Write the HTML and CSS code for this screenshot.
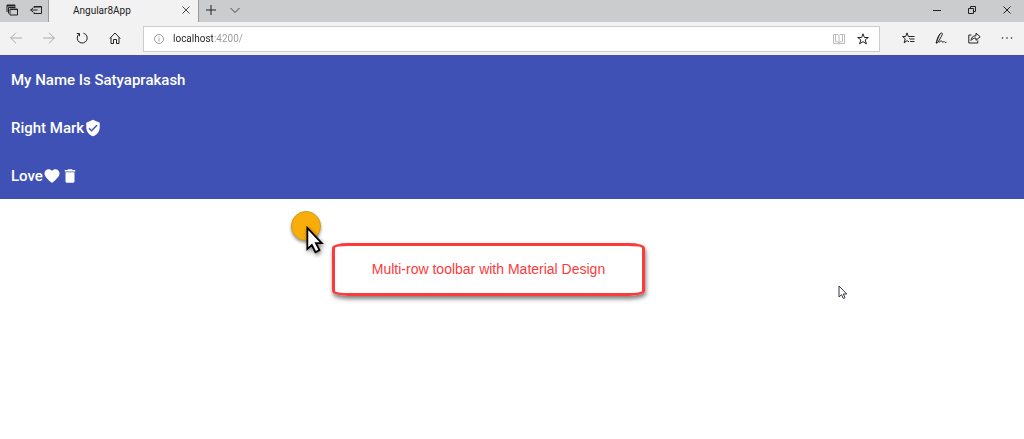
FILE: index.html
```html
<!DOCTYPE html>
<html lang="en">
	<head>
		<meta charset="utf-8">
		<title>Angular8App</title>
		<link rel="stylesheet" href="styles.css">
	</head>
	<body>
		<!-- tab strip -->
		<div class="tabs">
			<button class="tab-btn" aria-label="Tabs you've set aside">
				<svg width="12" height="12" viewBox="0 0 12 12"><path d="M1 8V1h8v1.500M1 2h8M2.500 9.500V3.500h7M4 5h7.500v6H4z"/><path d="M4 5.500h7.500M1 1.500h8"/></svg>
			</button>
			<button class="tab-btn" aria-label="Set these tabs aside">
				<svg width="12" height="12" viewBox="0 0 12 12"><path d="M4 4V2.500h7.500v7H4V8M4 3h7.500M.5 6h7M3 4L.7 6L3 8"/></svg>
			</button>
			<div class="tab">
				<span class="tab-title">Angular8App</span>
				<button class="tab-close" aria-label="Close tab">
					<svg class="thin" width="8" height="8" viewBox="0 0 8 8"><path d="M.5.5l7 7M7.500.5l-7 7"/></svg>
				</button>
			</div>
			<button class="tab-btn" aria-label="New tab">
				<svg width="10" height="10" viewBox="0 0 10 10"><path d="M5 0v10M0 5h10"/></svg>
			</button>
			<button class="tab-btn" aria-label="Show tab previews">
				<svg class="thin" width="10" height="10" viewBox="0 0 10 10"><path d="M.5 3L5 7.500L9.500 3"/></svg>
			</button>
			<div class="window">
				<button aria-label="Minimize"><svg width="8" height="8" viewBox="0 0 8 8"><path d="M0 4.500h8"/></svg></button>
				<button aria-label="Restore"><svg width="8" height="8" viewBox="0 0 8 8"><path d="M.5 2.500h5v5h-5zM2.500 2V.5h5v5H6"/></svg></button>
				<button aria-label="Close"><svg width="8" height="8" viewBox="0 0 8 8"><path d="M.5.5l7 7M7.500.5l-7 7"/></svg></button>
			</div>
		</div>

		<!-- address bar -->
		<div class="nav">
			<button class="off" aria-label="Back"><svg class="thin" width="12" height="12" viewBox="0 0 12 12"><path d="M.7 6H12M6 .7L.7 6L6 11.300"/></svg></button>
			<button class="off" aria-label="Forward"><svg class="thin" width="12" height="12" viewBox="0 0 12 12"><path d="M0 6h11.300M6 .7L11.300 6L6 11.300"/></svg></button>
			<button aria-label="Refresh"><svg width="12" height="12" viewBox="0 0 12 12"><path d="M7.500 1.200A5 5 0 1 1 3 2.200M.8 1.500h2.700v2.700"/></svg></button>
			<button aria-label="Home"><svg width="12" height="12" viewBox="0 0 12 12"><path d="M.7 6.500L6 1l5.300 5.500M2 5.500v6h2.500V7.500h3v4H10v-6"/></svg></button>
			<div class="address">
				<svg class="info" width="10" height="10" viewBox="0 0 10 10"><circle cx="5" cy="5" r="4.500"/><path d="M5 4.300v3.200M5 2.500v1"/></svg>
				<input class="url" type="text" aria-label="Address" value="localhost:4200/">
				<button class="off book" aria-label="Reading view"><svg width="12" height="12" viewBox="0 0 12 12"><path d="M.5 1.500H5l1 1l1-1h4.500v9H7l-1 .8l-1-.8H.5zM6 2.500v8M2.500 1.500v7.200h2L6 10l1.500-1.300h2V1.500"/></svg></button>
				<button aria-label="Add to favorites"><svg width="12" height="12" viewBox="0 0 12 12"><path d="M6 .8l1.400 3.700h3.900L8.200 6.900l1.200 4L6 8.600l-3.400 2.300l1.200-4L.7 4.500h3.900z"/></svg></button>
			</div>
			<button aria-label="Favorites"><svg width="13" height="12" viewBox="0 0 13 12"><path d="M7 4.500h5.500M8 7h4.500M8 9.500h4.500M7 4.500h-.6L5 .9L3.700 4.500H.6L3.200 6.800L2.200 10.800L5.200 8.600l1.800 1.300M7 7l.8-.6"/></svg></button>
			<button aria-label="Add notes"><svg width="12" height="12" viewBox="0 0 12 12"><path d="M1 11L4.200 3.500C5 1.500 6 .5 6.900 1s.4 1.700-.4 3.200L3 10.300L1.500 11.300C1.500 8 3 4 5.500 1.500M4 10.500c1.800-1.800 2.700-2 3-1.300s.3 1.500 1.200.8s1.300-.3 1.700.2s.8.500 1.600 0"/></svg></button>
			<button aria-label="Share"><svg width="13" height="12" viewBox="0 0 13 12"><path d="M3.500 3H.8v8h9V8.500M3 8.500C3.300 5.300 5 3.700 8 3.700V1.200l4.200 3.600L8 8.300V6C5.700 6 4.300 6.800 3 8.500z"/></svg></button>
			<button aria-label="Settings and more"><svg class="dots" width="12" height="12" viewBox="0 0 12 12"><circle cx="1.500" cy="6" r=".8"/><circle cx="6" cy="6" r=".8"/><circle cx="10.500" cy="6" r=".8"/></svg></button>
		</div>

		<!-- multi-row toolbar -->
		<header class="toolbar">
			<div class="toolbar-row">My Name Is Satyaprakash</div>
			<div class="toolbar-row">
				<span>Right Mark</span>
				<svg class="mat-icon" viewBox="0 0 24 24"><path d="M12 1L3 5v6c0 5.550 3.840 10.740 9 12 5.160-1.260 9-6.450 9-12V5l-9-4zm-2 16l-4-4 1.410-1.410L10 14.170l6.590-6.590L18 9l-8 8z"/></svg>
			</div>
			<div class="toolbar-row">
				<span>Love</span>
				<svg class="mat-icon" viewBox="0 0 24 24"><path d="M12 21.350l-1.450-1.320C5.400 15.360 2 12.280 2 8.500 2 5.420 4.420 3 7.500 3c1.740 0 3.410.81 4.500 2.090C13.090 3.810 14.760 3 16.500 3 19.580 3 22 5.420 22 8.500c0 3.780-3.400 6.860-8.550 11.540L12 21.350z"/></svg>
				<svg class="mat-icon" viewBox="0 0 24 24"><path d="M6 19c0 1.100.9 2 2 2h8c1.100 0 2-.9 2-2V7H6v12zM19 4h-3.500l-1-1h-5l-1 1H5v2h14V4z"/></svg>
			</div>
		</header>

		<main class="content">
			<p class="callout">Multi-row toolbar with Material Design</p>
			<div class="click">
				<svg width="18" height="29" viewBox="0 0 20 32"><path d="M1.500 2v23.500l5-4.500l4 8l4.500-2.300l-4-7.700h6.500z"/></svg>
			</div>
			<svg class="mouse" width="10" height="15" viewBox="0 0 10 15"><path d="M1 1v11l2.500-2.300L5.300 13.500L7 12.700L5.300 9H8.800z"/></svg>
		</main>
	</body>
</html>
```

FILE: styles.css
```css
*{
	margin: 0;
	padding: 0;
	box-sizing: border-box;
}
body{
	background-color: #fff;
	font-family: Roboto, "Noto Sans", sans-serif;
	font-size: 10px;
	color: #222;
}
button{
	display: flex;
	align-items: center;
	justify-content: center;
	border: none;
	background: none;
	color: #222;
}
svg{
	display: block;
	flex: none;
	fill: none;
	stroke: currentColor;
}
.thin{
	stroke-width: 0.8;
}

/* tab strip */
.tabs{
	display: flex;
	height: 22px;
	background-color: #cbccce;
}
.tab-btn{
	width: 24px;
	height: 20px;
}
.tab{
	display: flex;
	align-items: center;
	justify-content: space-between;
	width: 151px;
	padding: 0 0 2px 24px;
	border-left: 1px solid #999;
	border-right: 1px solid #999;
	background-color: #f2f2f2;
}
.tab-close{
	width: 24px;
	height: 20px;
}
.window{
	display: flex;
	margin-left: auto;
}
.window button{
	width: 35px;
	height: 20px;
}

/* address bar */
.nav{
	display: flex;
	align-items: center;
	height: 33px;
	background-color: #f2f2f2;
}
.nav button{
	width: 33px;
	height: 32px;
	padding: 0 1px 1px 0;
}
.nav .off{
	color: #999;
}
.address{
	display: flex;
	align-items: center;
	flex: 1;
	height: 26px;
	margin: 0 12px 0 11px;
	padding: 0 4px 0 10px;
	border: 1px solid #ccc;
	background-color: #fff;
}
.nav .address button{
	width: 24px;
	height: 24px;
	padding: 0;
}
.nav .book{
	color: #bbb;
}
.info{
	color: #888;
	stroke-width: 0.8;
}
.url{
	flex: 1;
	min-width: 0;
	height: 24px;
	margin-left: 9px;
	border: none;
	outline: none;
	font: 10px Roboto, "Noto Sans", sans-serif;
	/* dark host, grey port */
	color: transparent;
	background: linear-gradient(90deg, #222 40px, #999 40px);
	-webkit-background-clip: text;
	background-clip: text;
}
.dots{
	fill: currentColor;
	stroke: none;
}

/* toolbar */
.toolbar{
	background-color: #3f51b5;
	color: #fff;
	font: 500 15px Roboto, sans-serif;
}
.toolbar-row{
	display: flex;
	align-items: center;
	height: 48px;
	padding: 1px 11px 0;
}
.mat-icon{
	width: 18px;
	height: 18px;
	fill: #fff;
	stroke: none;
}

/* page */
.content{
	position: relative;
	padding: 44px 0;
}
.callout{
	width: 313px;
	margin-left: 332px;
	padding: 15px 0;
	border: 3px solid #fd3a3a;
	border-radius: 16px / 5px;
	box-shadow: 1px 3px 4px rgba(0,0,0,0.5);
	font: 14px/17px "Liberation Sans", Arial, sans-serif;
	text-align: center;
	color: #fd3a3a;
}
.click{
	position: absolute;
	top: 12px;
	left: 291px;
	width: 30px;
	height: 30px;
	border: 1px solid #d99a17;
	border-radius: 50%;
	background-color: #f9ad0a;
	box-shadow: 0 2px 3px rgba(0,0,0,0.4);
}
.click svg{
	position: absolute;
	top: 14px;
	left: 14px;
	fill: #fff;
	stroke: #000;
	stroke-width: 2;
	filter: drop-shadow(1px 2px 2px rgba(0,0,0,0.5));
}
.mouse{
	position: absolute;
	top: 86px;
	left: 838px;
	fill: #fff;
	stroke: #334;
}
```
